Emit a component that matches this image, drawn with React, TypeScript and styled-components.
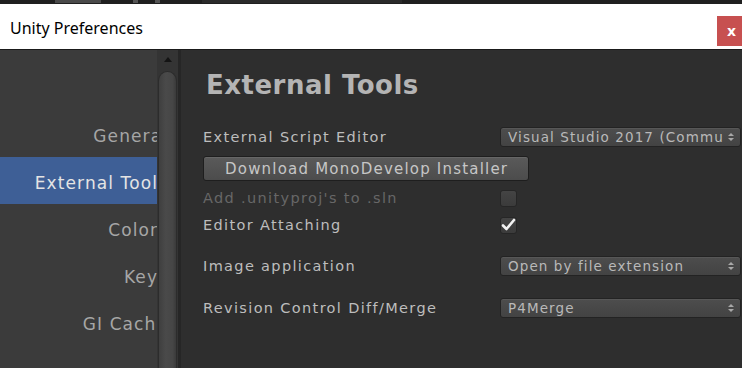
import React from "react";
import styled, { createGlobalStyle } from "styled-components";

const Global = createGlobalStyle`
  html, body {
    margin: 0;
    padding: 0;
    background: #2e2e2e;
  }
  * { box-sizing: border-box; }
`;

const Window = styled.div`
  width: 742px;
  height: 368px;
  display: flex;
  flex-direction: column;
  overflow: hidden;
  background: #2e2e2e;
`;

const TopStrip = styled.div`
  height: 4px;
  background: #1f1f1f;
  display: flex;
`;

const StripBlock = styled.div<{ $w: number; $ml: number; $c: string }>`
  width: ${(p) => p.$w}px;
  margin-left: ${(p) => p.$ml}px;
  height: 3px;
  background: ${(p) => p.$c};
`;

const TitleBar = styled.div`
  height: 46px;
  background: #ffffff;
  display: flex;
  align-items: center;
  justify-content: space-between;
  border-bottom: 1px solid #1a1a1a;
`;

const Title = styled.span`
  font-family: "Noto Sans", "Open Sans", sans-serif;
  font-size: 16px;
  color: #000;
  padding-left: 10px;
  margin-top: 2px;
`;

const CloseButton = styled.div`
  width: 25px;
  height: 30px;
  align-self: flex-start;
  margin-top: 12px;
  background: #c75050;
  color: #fff;
  font-family: "DejaVu Sans", sans-serif;
  font-weight: bold;
  font-size: 14px;
  display: flex;
  align-items: center;
  justify-content: center;
  padding-left: 4px;
`;

const Body = styled.div`
  flex: 1;
  display: flex;
  min-height: 0;
`;

const Sidebar = styled.div`
  width: 157px;
  flex-shrink: 0;
  background: #3b3b3b;
  overflow: hidden;
  padding-top: 60px;
`;

const NavItem = styled.div<{ $active?: boolean }>`
  height: 47px;
  margin-right: -11px;
  padding-top: 4px;
  display: flex;
  align-items: center;
  justify-content: flex-end;
  font-family: "DejaVu Sans", sans-serif;
  font-size: 17px;
  letter-spacing: 1.1px;
  white-space: nowrap;
  color: ${(p) => (p.$active ? "#e4e4e4" : "#a6a6a6")};
  background: ${(p) => (p.$active ? "#3e5f96" : "transparent")};
`;

const Scrollbar = styled.div`
  width: 24px;
  flex-shrink: 0;
  background: #343434;
  border-right: 3px solid #262626;
  display: flex;
  flex-direction: column;
  align-items: center;
`;

const ArrowUp = styled.div`
  margin-top: 7px;
  width: 0;
  height: 0;
  border-left: 4px solid transparent;
  border-right: 4px solid transparent;
  border-bottom: 5px solid #141414;
`;

const Thumb = styled.div`
  margin-top: 9px;
  width: 19px;
  flex: 1;
  border-radius: 10px 10px 0 0;
  background: linear-gradient(90deg, #3f3f3f, #4a4a4a 40%, #464646 80%, #3a3a3a);
  border: 1px solid #2c2c2c;
  border-bottom: none;
`;

const Content = styled.div`
  flex: 1;
  min-width: 0;
  padding: 0 1px 0 22px;
  display: flex;
  flex-direction: column;
  font-family: "DejaVu Sans", sans-serif;
`;

const Heading = styled.h1`
  margin: 18px 0 0 3px;
  font-family: "DejaVu Sans", sans-serif;
  font-weight: bold;
  font-size: 26px;
  letter-spacing: 0.5px;
  line-height: 34px;
  color: #b4b4b4;
`;

const Row = styled.div<{ $mt: number; $h: number }>`
  display: grid;
  grid-template-columns: 297px minmax(0, 1fr);
  align-items: center;
  margin-top: ${(p) => p.$mt}px;
  height: ${(p) => p.$h}px;
`;

const Label = styled.span<{ $disabled?: boolean }>`
  font-size: 14.5px;
  letter-spacing: 1.35px;
  color: ${(p) => (p.$disabled ? "#676767" : "#bdbdbd")};
  white-space: nowrap;
`;

const Button = styled.div`
  width: 326px;
  height: 25px;
  border: 1px solid #1e1e1e;
  border-radius: 3px;
  background: linear-gradient(#5a5a5a, #4c4c4c);
  box-shadow: inset 0 1px 0 #666;
  color: #c6c6c6;
  font-size: 15px;
  letter-spacing: 1.2px;
  display: flex;
  align-items: center;
  padding-left: 21px;
  white-space: nowrap;
  overflow: hidden;
`;

const Dropdown = styled.div`
  height: 20px;
  min-width: 0;
  border: 1px solid #232323;
  border-radius: 3px;
  background: linear-gradient(#4d4d4d, #434343);
  box-shadow: inset 0 1px 0 #575757;
  display: flex;
  align-items: center;
  padding: 0 6px 0 7px;
  gap: 4px;
`;

const DropText = styled.span`
  flex: 1;
  min-width: 0;
  overflow: hidden;
  white-space: nowrap;
  font-size: 13.5px;
  letter-spacing: 1.1px;
  color: #b9b9b9;
`;

const Arrows = styled.div`
  display: flex;
  flex-direction: column;
  gap: 2px;
`;

const Tri = styled.div<{ $down?: boolean }>`
  width: 0;
  height: 0;
  border-left: 3px solid transparent;
  border-right: 3px solid transparent;
  ${(p) =>
    p.$down
      ? "border-top: 3px solid #a8a8a8;"
      : "border-bottom: 3px solid #a8a8a8;"}
`;

const Checkbox = styled.div`
  width: 17px;
  height: 17px;
  border-radius: 3px;
  border: 1px solid #262626;
  background: linear-gradient(#444, #3b3b3b);
  display: flex;
  align-items: center;
  justify-content: center;
`;

const Select = ({ value }: { value: string }) => (
  <Dropdown>
    <DropText>{value}</DropText>
    <Arrows>
      <Tri />
      <Tri $down />
    </Arrows>
  </Dropdown>
);

const nav = ["General", "External Tools", "Colors", "Keys", "GI Cache"];

const App = () => {
  return (
    <>
      <Global />
      <Window>
        <TopStrip>
          <StripBlock $w={46} $ml={55} $c="#4a4a4a" />
          <StripBlock $w={5} $ml={32} $c="#555" />
          <StripBlock $w={5} $ml={17} $c="#555" />
          <StripBlock $w={200} $ml={42} $c="#2a2a2a" />
        </TopStrip>
        <TitleBar>
          <Title>Unity Preferences</Title>
          <CloseButton>x</CloseButton>
        </TitleBar>
        <Body>
          <Sidebar>
            {nav.map((n) => (
              <NavItem key={n} $active={n === "External Tools"}>
                {n}
              </NavItem>
            ))}
          </Sidebar>
          <Scrollbar>
            <ArrowUp />
            <Thumb />
          </Scrollbar>
          <Content>
            <Heading>External Tools</Heading>
            <Row $mt={25} $h={20}>
              <Label>External Script Editor</Label>
              <Select value="Visual Studio 2017 (Community)" />
            </Row>
            <Row $mt={9} $h={25}>
              <Button>Download MonoDevelop Installer</Button>
            </Row>
            <Row $mt={8} $h={18}>
              <Label $disabled>Add .unityproj's to .sln</Label>
              <Checkbox />
            </Row>
            <Row $mt={9} $h={18}>
              <Label>Editor Attaching</Label>
              <Checkbox>
                <svg width="15" height="14" viewBox="0 0 15 14">
                  <path
                    d="M2 7.5 L5.5 11 L13 2"
                    fill="none"
                    stroke="#f2f2f2"
                    strokeWidth="2.6"
                    strokeLinecap="round"
                    strokeLinejoin="round"
                  />
                </svg>
              </Checkbox>
            </Row>
            <Row $mt={22} $h={20}>
              <Label>Image application</Label>
              <Select value="Open by file extension" />
            </Row>
            <Row $mt={22} $h={20}>
              <Label>Revision Control Diff/Merge</Label>
              <Select value="P4Merge" />
            </Row>
          </Content>
        </Body>
      </Window>
    </>
  );
};

export default App;
